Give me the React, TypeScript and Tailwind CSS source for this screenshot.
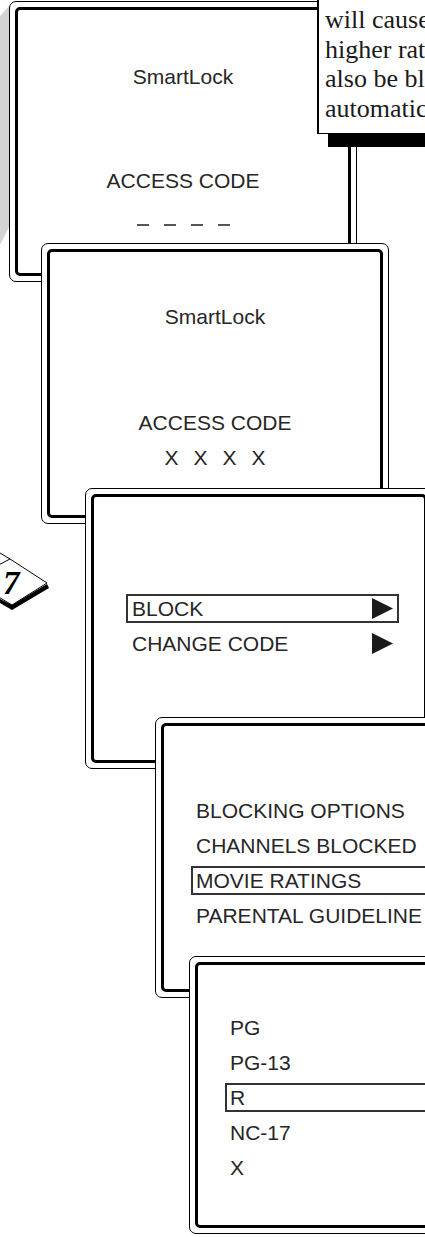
import React from "react";

const font = "font-['Liberation_Sans',Arial,sans-serif] text-[21px] leading-[24px] text-[#262626]";

function Tri() {
  return (
    <svg width="21" height="21" viewBox="0 0 21 21" className="block">
      <polygon points="0,0 21,10.5 0,21" fill="#1a1a1a" />
    </svg>
  );
}

export default function App() {
  return (
    <div className="relative w-[425px] h-[1237px] overflow-hidden bg-white">
      {/* gray perspective shadow */}
      <svg className="absolute left-0 top-0" width="12" height="300">
        <polygon points="0,16 10,5 10,225 0,245" fill="#d3d3d3" />
      </svg>

      {/* Screen 1 */}
      <div className="absolute left-[9px] top-[1px] w-[348px] h-[281px] bg-white border border-black rounded-[7px] p-[5px]">
        <div className={`h-full border-[3px] border-black rounded-[5px] overflow-hidden ${font}`}>
          <div className="flex flex-col items-center pt-[55px]">
            <div>SmartLock</div>
            <div className="mt-[80px]">ACCESS CODE</div>
            <div className="flex gap-[15px] mt-[31px]">
              <div className="w-[12px] h-[2px] bg-[#555]" />
              <div className="w-[12px] h-[2px] bg-[#555]" />
              <div className="w-[12px] h-[2px] bg-[#555]" />
              <div className="w-[12px] h-[2px] bg-[#555]" />
            </div>
          </div>
        </div>
      </div>

      {/* Note box top right */}
      <div className="absolute left-[328px] top-[-20px] w-[120px] h-[167px] bg-black" />
      <div className="absolute left-[317px] top-[-20px] w-[130px] h-[154px] bg-white border-l-2 border-b border-black">
        <div className="pt-[25px] pl-[6px] font-['Liberation_Serif','Times_New_Roman',serif] text-[26px] leading-[29.67px] text-[#1a1a1a] whitespace-nowrap">
          <div>will cause</div>
          <div>higher rat</div>
          <div>also be bl</div>
          <div>automatic</div>
        </div>
      </div>

      {/* Screen 2 */}
      <div className="absolute left-[41px] top-[243px] w-[348px] h-[281px] bg-white border border-black rounded-[7px] p-[5px]">
        <div className={`h-full border-[3px] border-black rounded-[5px] overflow-hidden ${font}`}>
          <div className="flex flex-col items-center pt-[53px]">
            <div>SmartLock</div>
            <div className="mt-[82px]">ACCESS CODE</div>
            <div className="flex gap-[15px] mt-[11px]">
              <span>X</span>
              <span>X</span>
              <span>X</span>
              <span>X</span>
            </div>
          </div>
        </div>
      </div>

      {/* Page number badge */}
      <svg className="absolute left-0 top-[540px]" width="60" height="80" viewBox="0 540 60 80">
        <polyline points="0,553 10,559" fill="none" stroke="black" strokeWidth="1" />
        <polygon points="-30,580 10,559 47,583 12,605" fill="white" stroke="black" strokeWidth="1" />
        <polygon points="47,584 12,605 0,599 0,603 12,610 49,588" fill="black" />
        <text x="3" y="594" fontFamily="Liberation Serif, serif" fontWeight="bold" fontStyle="italic" fontSize="33" fill="black">7</text>
      </svg>

      {/* Screen 3 */}
      <div className="absolute left-[85px] top-[488px] w-[348px] h-[281px] bg-white border border-black rounded-[7px] p-[5px]">
        <div className={`h-full border-[3px] border-black rounded-[5px] overflow-hidden ${font}`}>
          <div className="flex flex-col gap-[6px] pt-[97px] pl-[32px]">
            <div className="flex items-center justify-between w-[273px] h-[29px] border-2 border-[#333] pl-[4px] pr-[4px]">
              <span>BLOCK</span>
              <Tri />
            </div>
            <div className="flex items-center justify-between w-[273px] h-[29px] border-2 border-transparent pl-[4px] pr-[4px]">
              <span>CHANGE CODE</span>
              <Tri />
            </div>
          </div>
        </div>
      </div>

      {/* Screen 4 */}
      <div className="absolute left-[155px] top-[717px] w-[348px] h-[281px] bg-white border border-black rounded-[7px] p-[5px]">
        <div className={`h-full border-[3px] border-black rounded-[5px] overflow-hidden ${font}`}>
          <div className="flex flex-col gap-[6px] pt-[70px] pl-[27px]">
            <div className="flex items-center w-[300px] h-[29px] border-2 border-transparent pl-[3px]">BLOCKING OPTIONS</div>
            <div className="flex items-center w-[300px] h-[29px] border-2 border-transparent pl-[3px]">CHANNELS BLOCKED</div>
            <div className="flex items-center w-[300px] h-[29px] border-2 border-[#333] pl-[3px]">MOVIE RATINGS</div>
            <div className="flex items-center w-[300px] h-[29px] border-2 border-transparent pl-[3px]">PARENTAL GUIDELINE</div>
          </div>
        </div>
      </div>

      {/* Screen 5 */}
      <div className="absolute left-[189px] top-[956px] w-[348px] h-[278px] bg-white border border-black rounded-[7px] p-[5px]">
        <div className={`h-full border-[3px] border-black rounded-[5px] overflow-hidden ${font}`}>
          <div className="flex flex-col gap-[6px] pt-[48px] pl-[27px]">
            <div className="flex items-center w-[300px] h-[29px] border-2 border-transparent pl-[3px]">PG</div>
            <div className="flex items-center w-[300px] h-[29px] border-2 border-transparent pl-[3px]">PG-13</div>
            <div className="flex items-end w-[300px] h-[29px] border-2 border-[#333] pl-[3px]">R</div>
            <div className="flex items-center w-[300px] h-[29px] border-2 border-transparent pl-[3px]">NC-17</div>
            <div className="flex items-center w-[300px] h-[29px] border-2 border-transparent pl-[3px]">X</div>
          </div>
        </div>
      </div>
    </div>
  );
}
